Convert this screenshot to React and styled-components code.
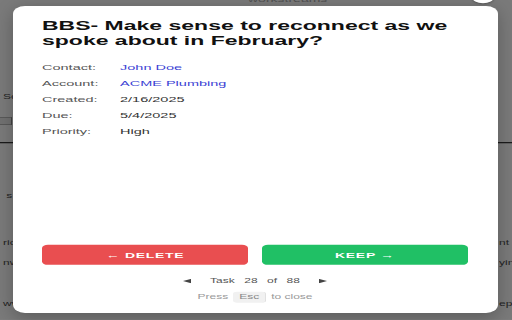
import React from 'react';
import styled, { createGlobalStyle } from 'styled-components';

const GlobalStyle = createGlobalStyle`
  html, body { margin: 0; padding: 0; overflow: hidden; background: #fff; }
  body { font-family: "Liberation Sans", Arial, Helvetica, sans-serif; }
  * { box-sizing: border-box; }
`;

const Frame = styled.div`
  position: relative;
  width: 512px;
  height: 320px;
  overflow: hidden;
`;

/* the captured page is 512x592, squeezed vertically into 320px */
const Stage = styled.div`
  position: relative;
  width: 512px;
  height: 592px;
  transform: scaleY(0.5405);
  transform-origin: 0 0;
`;

const BgPage = styled.div`
  display: flex;
  flex-direction: column;
  width: 512px;
  height: 592px;
  background: #fff;
  color: #4a4a4a;
  font-size: 12px;
`;

const BgHeader = styled.div`
  margin-top: -10px;
  height: 18px;
  padding-left: 248px;
  font-size: 14px;
  line-height: 18px;
  color: #a8a8a8;
`;

const BgRow = styled.div`
  display: flex;
  align-items: center;
  justify-content: space-between;
  height: 16px;
  margin-top: ${(p) => p.$mt}px;
  line-height: 16px;
  white-space: nowrap;
`;

const BgLeft = styled.span`
  padding-left: 3px;
`;

const BgRight = styled.span`
  width: 13px;
  overflow: hidden;
`;

const BgBox = styled.div`
  width: 12px;
  height: 14px;
  margin-top: ${(p) => p.$mt}px;
  border: 1px solid #8a8a8a;
  border-left: none;
  background: #ececec;
`;

const BgRule = styled.div`
  height: 2px;
  margin-top: ${(p) => p.$mt}px;
  background: #151515;
`;

const Overlay = styled.div`
  position: absolute;
  inset: 0;
  display: flex;
  padding: 11px 14px 13px 13px;
  background: rgba(0, 0, 0, 0.52);
`;

const CloseDot = styled.div`
  position: absolute;
  top: -16px;
  right: 18px;
  width: 22px;
  height: 22px;
  border-radius: 50%;
  background: #fff;
  box-shadow: 0 1px 3px rgba(0, 0, 0, 0.4);
`;

const Modal = styled.div`
  flex: 1;
  display: flex;
  flex-direction: column;
  padding: 24px 30px 19.5px 29px;
  background: #fff;
  border-radius: 12px / 15px;
  box-shadow: 0 8px 24px rgba(0, 0, 0, 0.25);
`;

const Title = styled.h1`
  margin: 0;
  font-size: 23px;
  line-height: 27.6px;
  font-weight: 700;
  color: #111;
`;

const Fields = styled.dl`
  display: grid;
  grid-template-columns: 78px 1fr;
  row-gap: 8px;
  margin: 24.8px 0 0;
  font-size: 14.5px;
  line-height: 21.5px;
`;

const Label = styled.dt`
  color: #555;
`;

const Value = styled.dd`
  margin: 0;
  color: ${(p) => (p.$link ? '#3b3fd4' : '#333')};
`;

const Actions = styled.div`
  display: grid;
  grid-template-columns: 1fr 1fr;
  gap: 14px;
  margin-top: auto;
`;

const ActionButton = styled.button`
  height: 37px;
  border: none;
  border-radius: 6px;
  background: ${(p) => (p.$tone === 'danger' ? '#e94e50' : '#20c065')};
  color: #fff;
  font-family: inherit;
  font-size: 14px;
  font-weight: 700;
  letter-spacing: 0.7px;
`;

const Nav = styled.div`
  display: flex;
  align-items: center;
  justify-content: center;
  gap: 19px;
  height: 20px;
  margin-top: 20px;
  font-size: 12px;
  color: #555;
`;

const NavGroup = styled.div`
  display: flex;
  gap: 9.5px;
`;

const Arrow = styled.svg`
  display: block;
  width: 8px;
  height: 8px;
  fill: #444;
`;

const Hint = styled.div`
  display: flex;
  align-items: center;
  justify-content: center;
  gap: 5px;
  height: 20px;
  margin-top: 9.5px;
  font-size: 12px;
  line-height: 20px;
  color: #999;
`;

const Kbd = styled.kbd`
  padding: 0 6px;
  border-radius: 4px;
  background: #f1f1f1;
  border-right: 1px solid #e0e0e0;
  font-family: inherit;
  font-size: 12px;
  color: #888;
`;

export default function App() {
  return (
    <>
      <GlobalStyle />
      <Frame>
        <Stage>
          <BgPage>
            <BgHeader>workstreams</BgHeader>
            <BgRow $mt={164}>
              <BgLeft>Sort</BgLeft>
            </BgRow>
            <BgBox $mt={29} />
            <BgRule $mt={32} />
            <BgRow $mt={90}>
              <BgLeft>&nbsp;s</BgLeft>
            </BgRow>
            <BgRow $mt={70}>
              <BgLeft>rio</BgLeft>
              <BgRight>nt</BgRight>
            </BgRow>
            <BgRow $mt={21}>
              <BgLeft>nw</BgLeft>
              <BgRight>yin</BgRight>
            </BgRow>
            <BgRow $mt={61}>
              <BgLeft>ww</BgLeft>
              <BgRight>ep</BgRight>
            </BgRow>
          </BgPage>
          <Overlay>
            <CloseDot />
            <Modal>
              <Title>BBS- Make sense to reconnect as we spoke about in February?</Title>
              <Fields>
                <Label>Contact:</Label>
                <Value $link>John Doe</Value>
                <Label>Account:</Label>
                <Value $link>ACME Plumbing</Value>
                <Label>Created:</Label>
                <Value>2/16/2025</Value>
                <Label>Due:</Label>
                <Value>5/4/2025</Value>
                <Label>Priority:</Label>
                <Value>High</Value>
              </Fields>
              <Actions>
                <ActionButton $tone="danger">← DELETE</ActionButton>
                <ActionButton $tone="ok">KEEP →</ActionButton>
              </Actions>
              <Nav>
                <Arrow viewBox="0 0 8 8"><path d="M0 4 L8 0 L8 8 Z" /></Arrow>
                <NavGroup>
                  <span>Task</span>
                  <span>28</span>
                  <span>of</span>
                  <span>88</span>
                </NavGroup>
                <Arrow viewBox="0 0 8 8"><path d="M8 4 L0 0 L0 8 Z" /></Arrow>
              </Nav>
              <Hint>
                <span>Press</span>
                <Kbd>Esc</Kbd>
                <span>to close</span>
              </Hint>
            </Modal>
          </Overlay>
        </Stage>
      </Frame>
    </>
  );
}
